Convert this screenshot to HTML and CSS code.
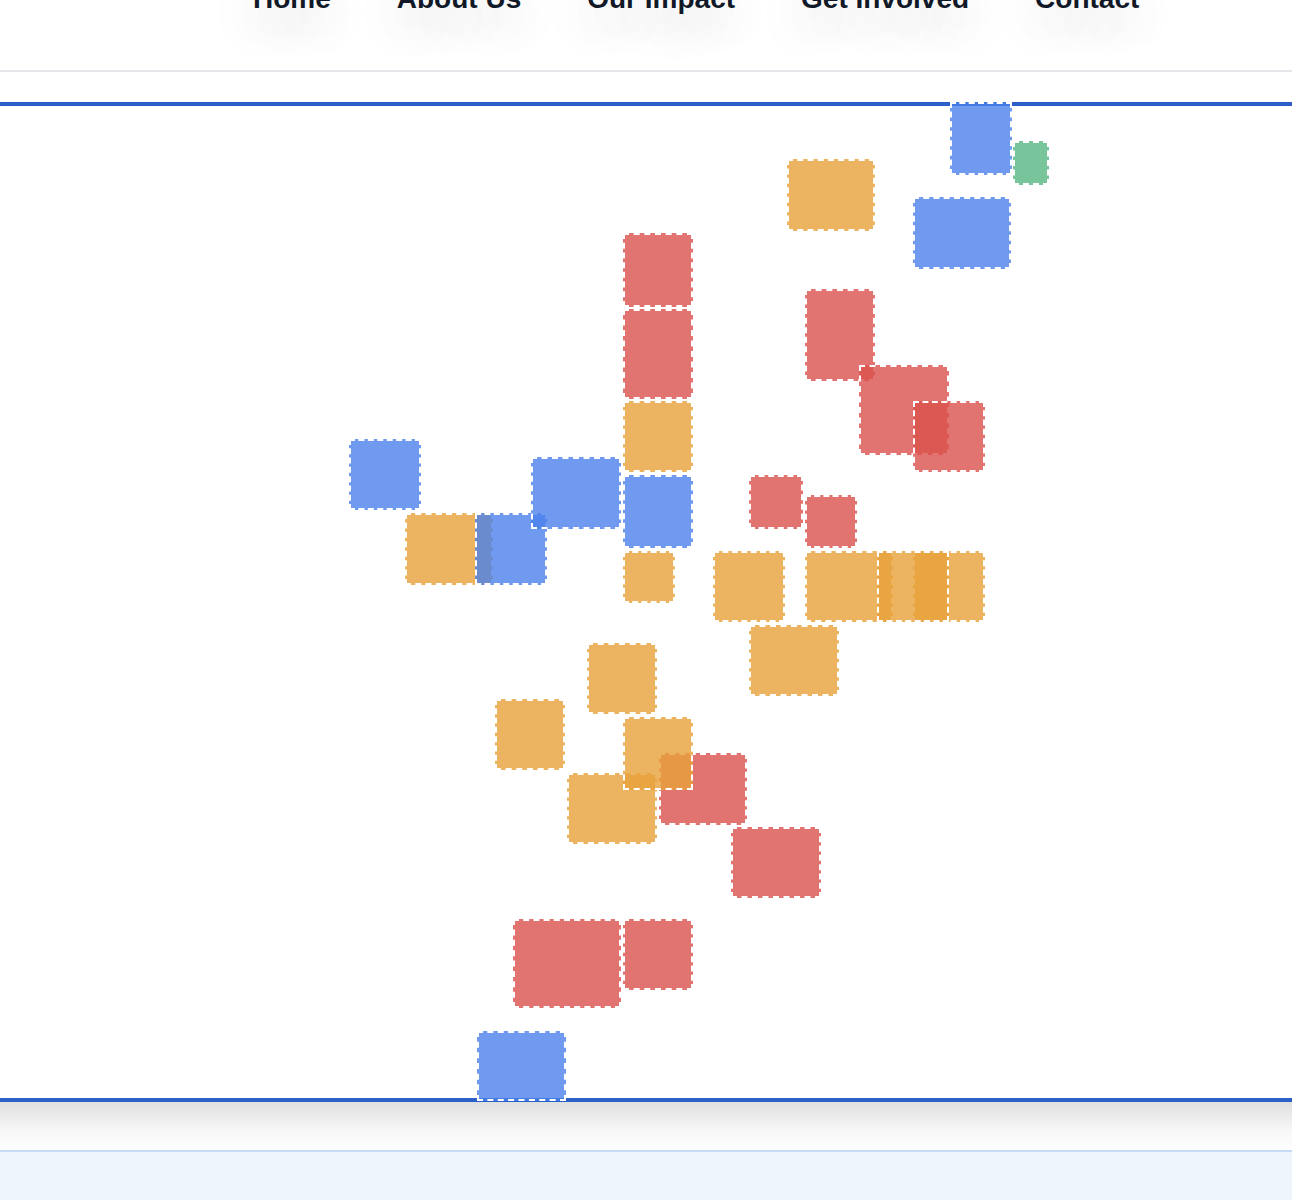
FILE: index.html
```html
<!DOCTYPE html>
<html lang="en">
<head>
<meta charset="utf-8">
<title>Treemap</title>
<link rel="stylesheet" href="styles.css">
</head>
<body>
<header class="site-header">
  <nav class="nav">
    <a class="nav-item" href="#">Home</a>
    <a class="nav-item" href="#">About Us</a>
    <a class="nav-item" href="#">Our Impact</a>
    <a class="nav-item" href="#">Get Involved</a>
    <a class="nav-item" href="#">Contact</a>
  </nav>
</header>
<main class="stage">
  <div class="canvas">
    <div class="cell orange" style="left:787px;top:53px;width:88px;height:72px"></div>
    <div class="cell red" style="left:623px;top:127px;width:70px;height:74px"></div>
    <div class="cell red" style="left:623px;top:203px;width:70px;height:90px"></div>
    <div class="cell red" style="left:805px;top:183px;width:70px;height:92px"></div>
    <div class="cell red" style="left:859px;top:259px;width:90px;height:90px"></div>
    <div class="cell red" style="left:913px;top:295px;width:72px;height:71px"></div>
    <div class="cell blue" style="left:950px;top:-4px;width:62px;height:73px"></div>
    <div class="cell blue" style="left:913px;top:91px;width:98px;height:72px"></div>
    <div class="cell green" style="left:1013px;top:35px;width:36px;height:44px"></div>
    <div class="cell blue" style="left:349px;top:333px;width:72px;height:71px"></div>
    <div class="cell orange" style="left:405px;top:407px;width:88px;height:72px"></div>
    <div class="cell blue" style="left:475px;top:407px;width:72px;height:72px"></div>
    <div class="cell blue" style="left:531px;top:351px;width:90px;height:72px"></div>
    <div class="cell orange" style="left:623px;top:295px;width:70px;height:71px"></div>
    <div class="cell blue" style="left:623px;top:369px;width:70px;height:73px"></div>
    <div class="cell red" style="left:749px;top:369px;width:54px;height:54px"></div>
    <div class="cell red" style="left:805px;top:389px;width:52px;height:53px"></div>
    <div class="cell orange" style="left:623px;top:445px;width:52px;height:52px"></div>
    <div class="cell orange" style="left:713px;top:445px;width:72px;height:71px"></div>
    <div class="cell orange" style="left:805px;top:445px;width:88px;height:71px"></div>
    <div class="cell orange" style="left:913px;top:445px;width:72px;height:71px"></div>
    <div class="cell orange" style="left:877px;top:445px;width:72px;height:71px"></div>
    <div class="cell orange" style="left:749px;top:519px;width:90px;height:71px"></div>
    <div class="cell orange" style="left:587px;top:537px;width:70px;height:71px"></div>
    <div class="cell orange" style="left:495px;top:593px;width:70px;height:71px"></div>
    <div class="cell orange" style="left:567px;top:667px;width:90px;height:71px"></div>
    <div class="cell red" style="left:659px;top:647px;width:88px;height:72px"></div>
    <div class="cell orange" style="left:623px;top:611px;width:70px;height:73px"></div>
    <div class="cell red" style="left:731px;top:721px;width:90px;height:71px"></div>
    <div class="cell red" style="left:513px;top:813px;width:108px;height:89px"></div>
    <div class="cell red" style="left:623px;top:813px;width:70px;height:71px"></div>
    <div class="cell blue" style="left:477px;top:925px;width:89px;height:70px"></div>
  </div>
  <div class="stage-fade"></div>
</main>
<section class="below"></section>
</body>
</html>
```

FILE: styles.css
```css
html, body {
  margin: 0;
  padding: 0;
  background: #ffffff;
}

body {
  font-family: "Liberation Sans", Arial, sans-serif;
  overflow: hidden;
}

.site-header {
  margin-top: -40px;
  height: 112px;
  box-sizing: border-box;
  border-bottom: 2px solid #e5e7eb;
  padding-top: 13px;
}

.nav {
  display: flex;
  align-items: center;
  gap: 18px;
  padding-left: 229px;
}

.nav-item {
  display: block;
  padding: 10px 24px;
  font-size: 28px;
  line-height: 32px;
  font-weight: 700;
  color: #111827;
  text-decoration: none;
  text-shadow: 0 14px 50px rgba(17, 24, 39, 0.32);
}

.stage {
  margin-top: 30px;
}

.canvas {
  position: relative;
  height: 992px;
  border-top: 4px solid #2c60c8;
  border-bottom: 4px solid #2c60c8;
  background: #ffffff;
}

.cell {
  position: absolute;
  box-sizing: border-box;
  border: 2px dashed #ffffff;
}

.blue { background: rgba(75, 129, 235, 0.8); }
.red { background: rgba(217, 81, 76, 0.8); }
.orange { background: rgba(231, 161, 58, 0.8); }
.green { background: rgba(88, 183, 130, 0.8); }

.stage-fade {
  height: 48px;
  background: linear-gradient(#dfdfdf, #f6f6f6 55%, #ffffff);
}

.below {
  height: 60px;
  border-top: 2px solid #c6dcf6;
  background: #eef5fd;
}
```
